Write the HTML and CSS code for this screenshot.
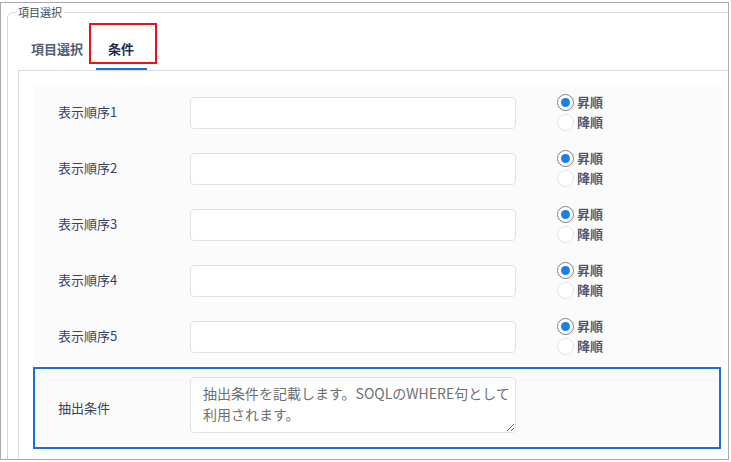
FILE: index.html
```html
<!DOCTYPE html>
<html lang="ja">
<head>
<meta charset="utf-8">
<link rel="stylesheet" href="styles.css">
</head>
<body>
<div class="frame">
  <fieldset class="group">
    <legend class="group-title">項目選択</legend>
    <div class="tabs">
      <div class="tab">項目選択</div>
      <div class="tab tab-active">条件<span class="mark"></span></div>
    </div>
    <div class="tab-body">
      <div class="form">
        <div class="row">
          <label class="row-label">表示順序1</label>
          <input class="text-input" type="text">
          <div class="radios">
            <div class="radio"><span class="dot dot-on"></span><span class="radio-text">昇順</span></div>
            <div class="radio"><span class="dot"></span><span class="radio-text">降順</span></div>
          </div>
        </div>
        <div class="row">
          <label class="row-label">表示順序2</label>
          <input class="text-input" type="text">
          <div class="radios">
            <div class="radio"><span class="dot dot-on"></span><span class="radio-text">昇順</span></div>
            <div class="radio"><span class="dot"></span><span class="radio-text">降順</span></div>
          </div>
        </div>
        <div class="row">
          <label class="row-label">表示順序3</label>
          <input class="text-input" type="text">
          <div class="radios">
            <div class="radio"><span class="dot dot-on"></span><span class="radio-text">昇順</span></div>
            <div class="radio"><span class="dot"></span><span class="radio-text">降順</span></div>
          </div>
        </div>
        <div class="row">
          <label class="row-label">表示順序4</label>
          <input class="text-input" type="text">
          <div class="radios">
            <div class="radio"><span class="dot dot-on"></span><span class="radio-text">昇順</span></div>
            <div class="radio"><span class="dot"></span><span class="radio-text">降順</span></div>
          </div>
        </div>
        <div class="row">
          <label class="row-label">表示順序5</label>
          <input class="text-input" type="text">
          <div class="radios">
            <div class="radio"><span class="dot dot-on"></span><span class="radio-text">昇順</span></div>
            <div class="radio"><span class="dot"></span><span class="radio-text">降順</span></div>
          </div>
        </div>
        <div class="row row-focus">
          <label class="row-label">抽出条件</label>
          <textarea class="text-area">抽出条件を記載します。SOQLのWHERE句として利用されます。</textarea>
        </div>
      </div>
    </div>
  </fieldset>
</div>
</body>
</html>
```
FILE: styles.css
```css
* { box-sizing: border-box; }
html, body { margin: 0; padding: 0; background: #ffffff; }
body {
  font-family: "Noto Sans CJK JP", "Noto Sans", sans-serif;
  color: #3b4866;
}
.frame {
  margin-top: 2px;
  width: 729px;
  height: 458px;
  border: 1px solid #a9a9a9;
  overflow: hidden;
  background: #fff;
}
.group {
  margin: 2px 0 0 6px;
  width: 740px;
  height: 500px;
  border: 1px solid #d6d8dc;
  border-radius: 6px;
  padding: 11px 0 0 10px;
  min-width: 0;
}
.group-title {
  font-size: 11px;
  line-height: 14px;
  padding: 0 2px 0 1px;
  margin-left: -1px;
  color: #444a55;
}
.tabs {
  display: flex;
  height: 40px;
  padding-left: 1px;
}
.tab {
  position: relative;
  padding: 0 13px 2px 12px;
  font-size: 13px;
  font-weight: 700;
  line-height: 38px;
  color: #53607a;
}
.tab-active {
  color: #1f2d4a;
  box-shadow: inset 0 -2px 0 #1c6fcf;
}
.mark {
  position: absolute;
  left: -7px;
  top: -7px;
  width: 68px;
  height: 41px;
  border: 2px solid #e8141b;
}
.tab-body {
  border: 1px solid #d9dce1;
  padding: 14px 0 0 14px;
  height: 420px;
}
.form {
  width: 688px;
  background: #fbfbfc;
}
.row {
  display: grid;
  grid-template-columns: 132px 326px auto;
  align-items: center;
  height: 56px;
  padding: 0 0 0 25px;
}
.row-label {
  font-size: 13px;
  color: #34425f;
  padding-bottom: 3px;
}
.text-input {
  width: 326px;
  height: 32px;
  border: 1px solid #dfe2e7;
  border-radius: 4px;
  background: #fff;
  margin: 0;
}
.radios {
  margin-left: 41px;
  display: flex;
  flex-direction: column;
  padding-bottom: 3px;
}
.radio {
  display: flex;
  align-items: center;
  height: 20px;
}
.dot {
  width: 17px;
  height: 17px;
  border-radius: 50%;
  border: 1px solid #e0e3e8;
  background: #fff;
  position: relative;
  margin-top: 2px;
}
.dot-on { border-color: #7b7f86; }
.dot-on::after {
  content: "";
  position: absolute;
  left: 3px;
  top: 3px;
  width: 9px;
  height: 9px;
  border-radius: 50%;
  background: #1a7ee6;
}
.radio-text {
  margin-left: 3px;
  font-size: 13px;
  font-weight: 700;
  color: #4d5a76;
}
.row-focus {
  margin-top: 2px;
  height: 82px;
  border: 2px solid #1e6fd0;
  padding: 8px 0 14px 23px;
  align-items: center;
}
.row-focus .row-label { padding: 4px 0 0 0; }
.text-area {
  width: 326px;
  height: 56px;
  border: 1px solid #dfe2e7;
  border-radius: 4px;
  background: #fff;
  padding: 5px 4px 5px 12px;
  margin: 0;
  font-family: "Noto Sans CJK JP", "Noto Sans", sans-serif;
  font-size: 14px;
  line-height: 21px;
  color: #6f6f72;
  overflow: hidden;
}
```
